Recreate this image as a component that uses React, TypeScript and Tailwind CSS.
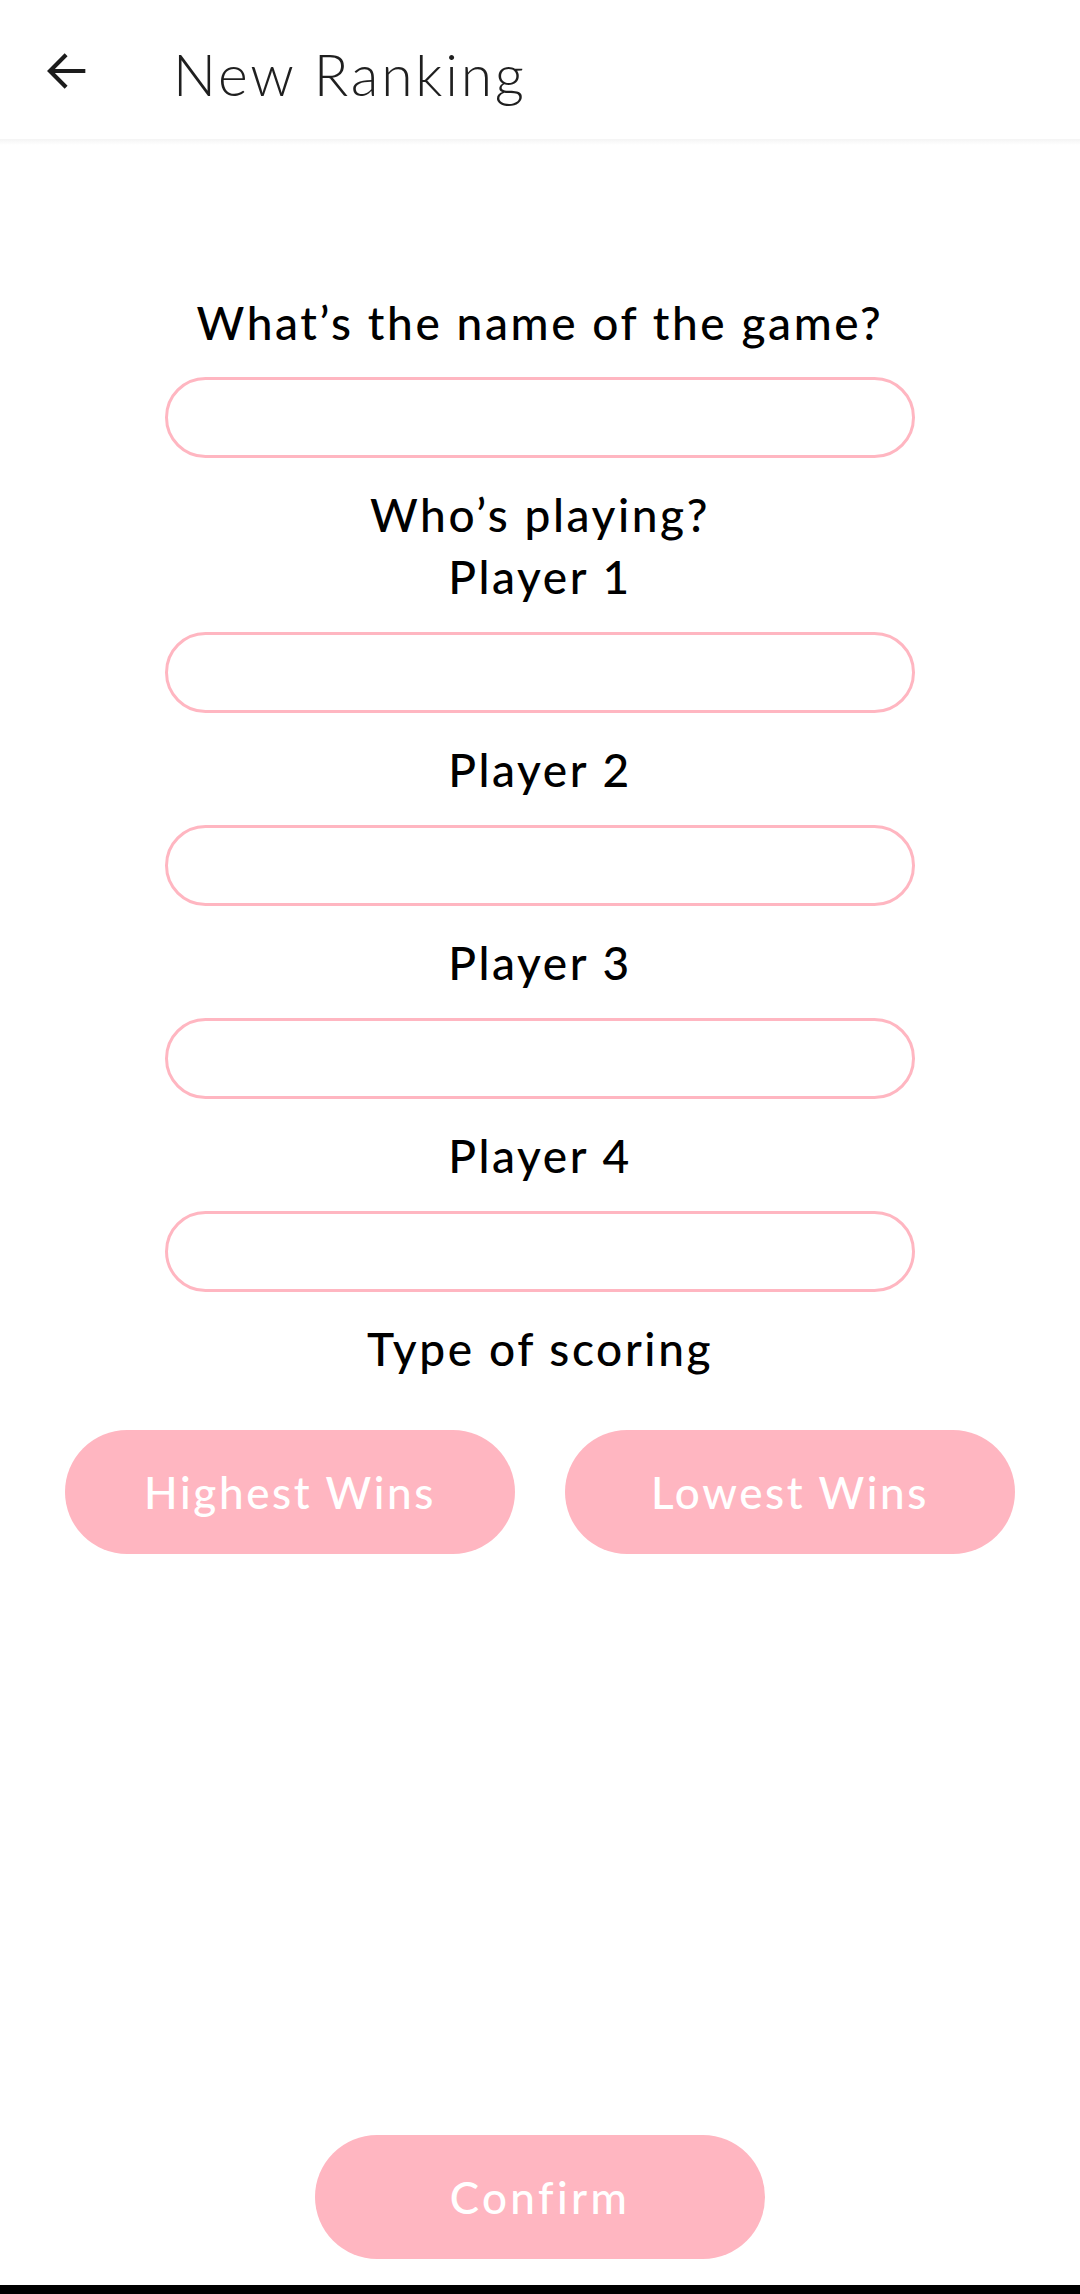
import React from "react";

const font = { fontFamily: "Lato, 'Open Sans', sans-serif" };

function Label({ children, mt }: { children: React.ReactNode; mt: string }) {
  return (
    <div className={`${mt} text-center text-[46px] leading-[62px] tracking-[2.6px] text-black font-medium`}>{children}</div>
  );
}

function Field({ mt }: { mt: string }) {
  return (
    <div className={`${mt} mx-[165px] h-[81px] rounded-full border-[3px] border-[#ffb6c1] bg-white`} />
  );
}

export default function App() {
  return (
    <div className="w-[1080px] h-[2294px] bg-white flex flex-col overflow-hidden" style={font}>
      <header className="h-[139px] shrink-0 flex items-start bg-white">
        <svg className="ml-[37px] mt-[42px] w-[58px] h-[58px]" viewBox="0 0 24 24" fill="#1c1c1c">
          <path d="M20 11.15H7.4l5.25-5.25-1.2-1.2L4.15 12l7.3 7.3 1.2-1.2-5.25-5.25H20v-1.7z" />
        </svg>
        <div className="ml-[78px] mt-[46px] text-[57px] font-light tracking-[2.8px] text-[#1f1f1f] leading-none">New Ranking</div>
      </header>
      <div className="h-[6px] shrink-0 bg-gradient-to-b from-[#f4f4f4] to-white" />
      <Label mt="mt-[147px]">What’s the name of the game?</Label>
      <Field mt="mt-[23px]" />
      <Label mt="mt-[26px]">Who’s playing?</Label>
      <Label mt="mt-0">Player 1</Label>
      <Field mt="mt-[24px]" />
      <Label mt="mt-[26px]">Player 2</Label>
      <Field mt="mt-[24px]" />
      <Label mt="mt-[26px]">Player 3</Label>
      <Field mt="mt-[24px]" />
      <Label mt="mt-[26px]">Player 4</Label>
      <Field mt="mt-[24px]" />
      <Label mt="mt-[26px]">Type of scoring</Label>
      <div className="mt-[50px] px-[65px] flex gap-[50px]">
        <button className="flex-1 h-[124px] rounded-full bg-[#ffb6c1] text-white text-[44px] tracking-[2.6px] font-medium">Highest Wins</button>
        <button className="flex-1 h-[124px] rounded-full bg-[#ffb6c1] text-white text-[44px] tracking-[2.6px] font-medium">Lowest Wins</button>
      </div>
      <div className="mt-auto mb-[26px] flex justify-center">
        <button className="w-[450px] h-[124px] rounded-full bg-[#ffb6c1] text-white text-[44px] tracking-[3.4px] font-medium">Confirm</button>
      </div>
      <div className="h-[9px] shrink-0 bg-black" />
    </div>
  );
}
